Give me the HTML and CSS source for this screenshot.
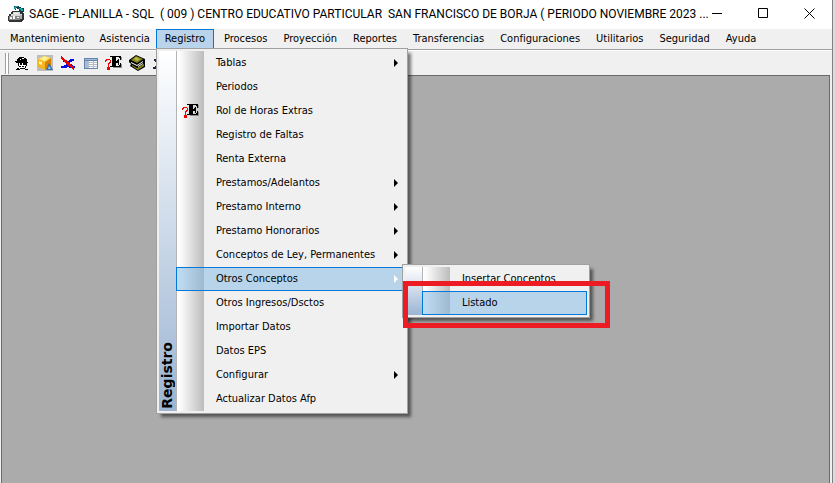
FILE: index.html
```html
<!DOCTYPE html>
<html lang="es">
<head>
<meta charset="utf-8">
<title>SAGE - PLANILLA - SQL</title>
<link rel="stylesheet" href="styles.css">
</head>
<body>
<div class="window">
  <header class="titlebar">
    <svg class="app-icon" width="18" height="18" viewBox="0 0 18 18" shape-rendering="crispEdges" aria-hidden="true">
      <path fill="#0d3d48" d="M6 1h5v1h2v1h3v4h-1v1h-2V6h-2V4H9V3H8v2H7V4H6z"/>
      <path fill="#12a5a5" d="M7 1h3v1H7zM11 3h3v1h-3zM12 4h3v2h-2V5h-1zM6 2h2v2H6z"/>
      <path fill="#333" d="M4 6h9v2h3v7h-1v1h-1v1H1v-1H0v-5h1V9h2V7h1z"/>
      <path fill="#d8d8d8" d="M5 7h7v2h2v2H3V9h2z"/>
      <path fill="#888" d="M1 11h11v4H1z"/>
      <path fill="#f4f4f4" d="M2 12h2v2H2zM5 11h2v3H5zM9 12h2v1H9zM6 8h4v1H6z"/>
      <path fill="#aaa" d="M12 10h2v4h-2z"/>
    </svg>
    <h1 class="title">SAGE - PLANILLA - SQL &nbsp;( 009 ) CENTRO EDUCATIVO PARTICULAR &nbsp;SAN FRANCISCO DE BORJA ( PERIODO NOVIEMBRE 2023 ...</h1>
    <div class="controls">
      <button type="button" class="control" aria-label="Minimizar"><svg width="11" height="11" viewBox="0 0 11 11"><path d="M0 5.5h10" stroke="#000" fill="none"/></svg></button>
      <button type="button" class="control" aria-label="Maximizar"><svg width="11" height="11" viewBox="0 0 11 11"><path d="M.5.5h9v9h-9z" stroke="#000" fill="none"/></svg></button>
      <button type="button" class="control" aria-label="Cerrar"><svg width="11" height="11" viewBox="0 0 11 11"><path d="M.5.5l10 10M10.5.5l-10 10" stroke="#000" fill="none"/></svg></button>
    </div>
  </header>

  <nav class="menubar">
    <button type="button" class="menu-title">Mantenimiento</button>
    <button type="button" class="menu-title">Asistencia</button>
    <div class="menu-host">
      <button type="button" class="menu-title open">Registro</button>
      <div class="popup">
        <div class="band"><span class="band-label">Registro</span></div>
        <ul class="items">
          <li><button type="button" class="item">Tablas<i class="arrow"></i></button></li>
          <li><button type="button" class="item">Periodos</button></li>
          <li><button type="button" class="item">
            <svg class="item-icon" width="17" height="16" viewBox="0 0 17 16" shape-rendering="crispEdges" aria-hidden="true"><use href="#extras"/></svg>Rol de Horas Extras</button></li>
          <li><button type="button" class="item">Registro de Faltas</button></li>
          <li><button type="button" class="item">Renta Externa</button></li>
          <li><button type="button" class="item">Prestamos/Adelantos<i class="arrow"></i></button></li>
          <li><button type="button" class="item">Prestamo Interno<i class="arrow"></i></button></li>
          <li><button type="button" class="item">Prestamo Honorarios<i class="arrow"></i></button></li>
          <li><button type="button" class="item">Conceptos de Ley, Permanentes<i class="arrow"></i></button></li>
          <li class="sub-host">
            <button type="button" class="item selected">Otros Conceptos<i class="arrow"></i></button>
            <div class="popup submenu">
              <div class="band"></div>
              <ul class="items">
                <li><button type="button" class="item">Insertar Conceptos</button></li>
                <li><button type="button" class="item selected">Listado</button></li>
              </ul>
              <div class="callout"></div>
            </div>
          </li>
          <li><button type="button" class="item">Otros Ingresos/Dsctos</button></li>
          <li><button type="button" class="item">Importar Datos</button></li>
          <li><button type="button" class="item">Datos EPS</button></li>
          <li><button type="button" class="item">Configurar<i class="arrow"></i></button></li>
          <li><button type="button" class="item">Actualizar Datos Afp</button></li>
        </ul>
      </div>
    </div>
    <button type="button" class="menu-title">Procesos</button>
    <button type="button" class="menu-title">Proyección</button>
    <button type="button" class="menu-title">Reportes</button>
    <button type="button" class="menu-title">Transferencias</button>
    <button type="button" class="menu-title">Configuraciones</button>
    <button type="button" class="menu-title">Utilitarios</button>
    <button type="button" class="menu-title">Seguridad</button>
    <button type="button" class="menu-title">Ayuda</button>
  </nav>

  <div class="toolbar">
    <span class="grip"></span>
    <button type="button" class="tool" aria-label="Personal">
      <svg width="16" height="16" viewBox="0 0 16 16" shape-rendering="crispEdges">
        <path fill="#000" d="M5 2h5v1h2v1h1v3h1v1h-1v1H6V8H2V7H1V6h2V4h1V3h1z"/>
        <path fill="#fff" d="M6 4h1v1H6zM8 3h2v1H8zM5 8h7v3h-1v2H6v-2H5z"/>
        <path fill="#000" d="M4 8h1v3H4zM6 8h2v2H6zM9 8h3v2H9zM12 9h1v2h-1zM5 11h2v1H5zM8 11h2v1H8zM11 11h1v2h-1zM6 13h5v1H6zM2 14h4v1H2zM11 14h3v1h-3zM3 13h2v1H3z"/>
      </svg>
    </button>
    <button type="button" class="tool" aria-label="Empresa">
      <svg width="16" height="16" viewBox="0 0 16 16">
        <path fill="#bdbdbd" d="M0 0h16v16H0z"/>
        <path fill="#ffe45e" d="M1 4l6-3 7 2-6 4z"/>
        <path fill="#f5b51c" d="M1 4l7 3v8l-7-3z"/>
        <path fill="#d98200" d="M8 7l6-4v8l-6 4z"/>
        <path fill="#fff3a0" d="M4 4l4-2 3 1-4 2zM2 6l3 1v3L2 9z"/>
        <path fill="#2d6fb4" d="M12 8l4 7H9z"/><path fill="#a7d0ee" d="M12 11l2 3h-3z"/>
      </svg>
    </button>
    <button type="button" class="tool" aria-label="Anular">
      <svg width="16" height="16" viewBox="0 0 16 16" shape-rendering="crispEdges">
        <path fill="#0010d8" d="M3 5h4v1h2V5h1V4h4v2h-2v1h-2v2h2v1h1v1h2v2H9v-1H7v1H1v-2h3v-1h2V8H5V7H3z"/>
        <path d="M1 2l13 12" stroke="#e60000" stroke-width="2.4"/>
      </svg>
    </button>
    <button type="button" class="tool" aria-label="Tabla">
      <svg width="16" height="16" viewBox="0 0 16 16" shape-rendering="crispEdges">
        <path fill="#6583ad" d="M1 3h14v11H1z"/><path fill="#fff" d="M2 6h12v7H2z"/>
        <path fill="#9fb9df" d="M2 4h12v1H2zM2 6h3v7H2z"/>
        <path fill="#b3bdca" d="M2 7h12v1H2zM2 9h12v1H2zM2 11h12v1H2zM5 6h1v7H5zM10 6h1v7h-1z"/>
      </svg>
    </button>
    <button type="button" class="tool" aria-label="Horas extras">
      <svg width="17" height="16" viewBox="0 0 17 16" shape-rendering="crispEdges">
        <g id="extras">
          <path fill="#f00000" d="M1 4h4v1h1v3H5v1H4v2H3V8h1V7h1V5H2v1H1v1H0V5h1zM2 12h3v3H2zM3 11h1v1H3z"/>
          <path fill="#909090" d="M7 12h9V9h1v4H8zM16 2h1v3h-1z"/>
          <path fill="#000" d="M5 1h11v4h-1V3h-1V2h-3v4h1V5h1V4h1v6h-1V8h-2v3h3v-1h1V8h1v4H5v-1h2V2H5z"/>
        </g>
      </svg>
    </button>
    <button type="button" class="tool" aria-label="Libros">
      <svg width="16" height="16" viewBox="0 0 16 16">
        <path fill="#000" d="M0 5l7-5 9 4v8l-7 4-8-5 1-2-2-2z"/>
        <path fill="#85851c" d="M2 5l5-4 7 3-6 4z"/><path fill="#b8b84b" d="M5 4l2-2 4 2-3 2z"/>
        <path fill="#fff" d="M2 7l6 3 6-4v1l-6 4-6-3z"/>
        <path fill="#85851c" d="M3 10l5 3 7-4v2l-6 4-6-4z"/><path fill="#f4f4df" d="M9 11l5-3v1l-5 3z"/>
      </svg>
    </button>
    <button type="button" class="tool" aria-label="Procesar">
      <svg width="16" height="16" viewBox="0 0 16 16" shape-rendering="crispEdges">
        <path fill="#222244" d="M2 4h3v3H3V6H2zM1 12h2v-1h3v3H1z"/>
      </svg>
    </button>
  </div>
  <main class="workspace"></main>
</div>
</body>
</html>
```
FILE: styles.css
```css
* { box-sizing: border-box; }

body {
  margin: 0;
  background: #dcdcdc;
  color: #000;
  font: 11px/16px "DejaVu Sans Condensed", "Noto Sans", sans-serif;
}

button {
  margin: 0;
  padding: 0;
  border: 0;
  background: none;
  color: inherit;
  font: inherit;
}

ul { margin: 0; padding: 0; list-style: none; }

.window {
  display: flex;
  flex-direction: column;
  height: 100vh;
  margin-right: 2px;
  border-right: 1px solid #808080;
  background: #f0f0f0;
}

.titlebar {
  display: flex;
  align-items: center;
  height: 29px;
  padding: 0 0 2px 8px;
  background: #fff;
}

.app-icon { flex: none; margin-right: 3px; }

.title {
  flex: 1;
  min-width: 0;
  margin: 0;
  white-space: nowrap;
  font: 12px/18px Roboto, sans-serif;
}

.controls { display: flex; }

.control {
  display: flex;
  align-items: center;
  justify-content: center;
  width: 46px;
  height: 27px;
}

.menubar {
  display: flex;
  height: 21px;
  padding-left: 1px;
  border-bottom: 1px solid #a0a0a0;
}

.menu-host { position: relative; }

.menu-title {
  height: 19px;
  padding: 0 6px 0 9px;
  white-space: nowrap;
}

.menu-title.open {
  min-width: 58px;
  padding: 0;
  border: 1px solid #0078d7;
  border-bottom: 0;
  background: #b8d3ea;
}

.menu-host ~ .menu-title { padding-left: 10px; }

.popup {
  position: absolute;
  z-index: 1;
  top: 19px;
  left: 0;
  display: flex;
  width: 252px;
  padding: 2px;
  border: 1px solid #a0a0a0;
  background: #f0f0f0;
  box-shadow: 4px 4px 3px -1px rgba(0, 0, 0, 0.5);
}

.band {
  display: flex;
  align-items: flex-end;
  width: 17px;
  background: linear-gradient(#fff, #9ab4d2);
}

.band-label {
  padding: 2px 0;
  writing-mode: vertical-rl;
  transform: rotate(180deg);
  font: bold 14px/17px "DejaVu Sans", sans-serif;
}

.items {
  flex: 1;
  background: linear-gradient(90deg, #b4b4b4 1px, #fff 1px, #f8f8f8 20%, #bcbcbc) 0 0 / 28px 100% no-repeat;
}

.item {
  position: relative;
  display: flex;
  align-items: center;
  width: 100%;
  height: 24px;
  padding-left: 40px;
  white-space: nowrap;
}

.item.selected {
  background: rgba(126, 184, 230, 0.5);
  outline: 1px solid #0078d7;
  outline-offset: -1px;
}

.item-icon { position: absolute; left: 6px; }

.arrow {
  margin: 0 7px 0 auto;
  border: 4px solid transparent;
  border-left-color: #000;
  border-right: 0;
}

.selected .arrow { border-left-color: #fff; }

.sub-host { position: relative; }

.submenu {
  top: -3px;
  left: 226px;
  width: 188px;
}

.callout {
  position: absolute;
  top: 16px;
  left: 0;
  width: 207px;
  height: 47px;
  border: 5px solid #ed1c24;
  pointer-events: none;
}

.toolbar {
  display: flex;
  align-items: center;
  height: 25px;
  padding-left: 5px;
  border-top: 1px solid #fff;
}

.grip {
  width: 4px;
  height: 21px;
  margin-right: 1px;
  border: solid #a0a0a0;
  border-width: 0 1px;
  background: #fff;
}

.tool {
  display: flex;
  align-items: center;
  justify-content: center;
  width: 23px;
  height: 22px;
}

.workspace {
  flex: 1;
  margin: 0 2px 0 1px;
  border: solid #696969;
  border-width: 1px 1px 0;
  background: #ababab;
}
```
